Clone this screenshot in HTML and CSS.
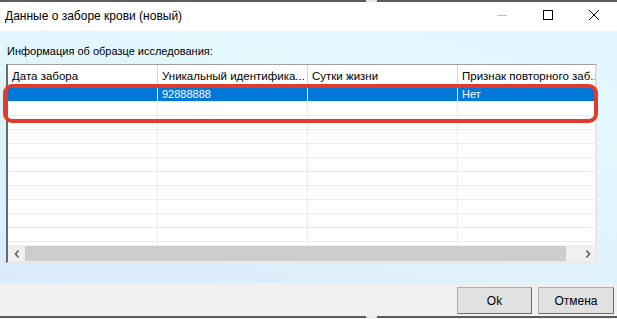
FILE: index.html
```html
<!DOCTYPE html>
<html lang="ru">
<head>
  <meta charset="UTF-8" />
  <title>Данные о заборе крови (новый)</title>
  <link rel="stylesheet" href="styles.css">
</head>
<body>
  <div class="window">
    <div class="edge"></div>

    <!-- Title bar -->
    <div class="titlebar">
      <div class="title">Данные о заборе крови (новый)</div>
      <div class="controls">
        <div class="ctl"><svg width="10" height="10" viewBox="0 0 10 10"><path d="M0 5.5H10" stroke="#c4c4c4" stroke-width="1"/></svg></div>
        <div class="ctl"><svg width="10" height="10" viewBox="0 0 10 10"><rect x="0.5" y="0.5" width="9" height="9" fill="none" stroke="#000" stroke-width="1"/></svg></div>
        <div class="ctl"><svg width="10" height="10" viewBox="0 0 10 10"><path d="M0 0L10 10M10 0L0 10" stroke="#000" stroke-width="1"/></svg></div>
      </div>
    </div>

    <!-- Client area -->
    <div class="client">
      <div class="caption">Информация об образце исследования:</div>
      <div class="grid">
        <div class="row head">
          <div class="cell">Дата забора</div>
          <div class="cell">Уникальный идентифика...</div>
          <div class="cell">Сутки жизни</div>
          <div class="cell">Признак повторного заб..</div>
        </div>
        <div class="rows">
          <div class="row selected">
            <div class="cell"></div>
            <div class="cell">92888888</div>
            <div class="cell"></div>
            <div class="cell">Нет</div>
          </div>
          <div class="row"><div class="cell"></div><div class="cell"></div><div class="cell"></div><div class="cell"></div></div>
          <div class="row"><div class="cell"></div><div class="cell"></div><div class="cell"></div><div class="cell"></div></div>
          <div class="row"><div class="cell"></div><div class="cell"></div><div class="cell"></div><div class="cell"></div></div>
          <div class="row"><div class="cell"></div><div class="cell"></div><div class="cell"></div><div class="cell"></div></div>
          <div class="row"><div class="cell"></div><div class="cell"></div><div class="cell"></div><div class="cell"></div></div>
          <div class="row"><div class="cell"></div><div class="cell"></div><div class="cell"></div><div class="cell"></div></div>
          <div class="row"><div class="cell"></div><div class="cell"></div><div class="cell"></div><div class="cell"></div></div>
          <div class="row"><div class="cell"></div><div class="cell"></div><div class="cell"></div><div class="cell"></div></div>
          <div class="row"><div class="cell"></div><div class="cell"></div><div class="cell"></div><div class="cell"></div></div>
          <div class="row"><div class="cell"></div><div class="cell"></div><div class="cell"></div><div class="cell"></div></div>
          <div class="row"><div class="cell"></div><div class="cell"></div><div class="cell"></div><div class="cell"></div></div>
        </div>
        <div class="hscroll">
          <div class="arrow"><svg width="6" height="8" viewBox="0 0 6 8"><path d="M4.5 0.5L1.5 4L4.5 7.5" fill="none" stroke="#606060" stroke-width="1.6"/></svg></div>
          <div class="track"><div class="thumb"></div></div>
          <div class="arrow"><svg width="6" height="8" viewBox="0 0 6 8"><path d="M1.5 0.5L4.5 4L1.5 7.5" fill="none" stroke="#606060" stroke-width="1.6"/></svg></div>
        </div>
      </div>
    </div>

    <!-- Footer -->
    <div class="footer">
      <button class="btn">Ok</button>
      <button class="btn">Отмена</button>
    </div>
    <div class="edge bottom"></div>

    <!-- annotation around the selected row -->
    <div class="mark"></div>
  </div>
</body>
</html>
```

FILE: styles.css
```css
* { box-sizing: border-box; }
body {
  margin: 0;
  width: 617px;
  height: 319px;
  overflow: hidden;
  font-family: "Liberation Sans", Arial, sans-serif;
  color: #000;
  background: #f0f0f0;
}

.window {
  position: relative;
  width: 617px;
  height: 319px;
  display: flex;
  flex-direction: column;
}

.edge {
  height: 2px;
  background: linear-gradient(to right, #5c5c5c 366px, #e8e8e8 366px, #e8e8e8 377px, #5c5c5c 377px);
}
.edge.bottom {
  height: 3px;
  border-bottom: 1px solid #f4f4f4;
}

.titlebar {
  height: 29px;
  background: #fff;
  display: flex;
  justify-content: space-between;
}
.title {
  padding-left: 5px;
  font-size: 12px;
  line-height: 29px;
}
.controls {
  display: flex;
}
.ctl {
  width: 46px;
  height: 25px;
  display: flex;
  align-items: center;
  justify-content: center;
}
.ctl svg { display: block; }

.client {
  height: 252px;
  padding: 14px 0 0 6px;
  background: linear-gradient(15deg, #d9eafa 0%, #dff2fc 35%, #e2f8fd 70%, #e1f7fd 100%);
}
.caption {
  font-size: 11px;
  line-height: 13px;
  margin: 0 0 6px 1px;
}

.grid {
  width: 591px;
  height: 199px;
  background: #fff;
  border-left: 2px solid #6a6a6a;
  border-top: 1px solid #a0a0a0;
  border-right: 1px solid #e3e3e3;
  border-bottom: 1px solid #e3e3e3;
  display: flex;
  flex-direction: column;
  overflow: hidden;
}

.row {
  display: grid;
  grid-template-columns: 150px 150px 150px 138px;
  height: 14px;
  border-bottom: 1px solid #ececec;
  font-size: 11px;
  line-height: 13px;
  white-space: nowrap;
}
.row .cell {
  padding-left: 4px;
  border-right: 1px solid #ececec;
  overflow: hidden;
}
.row.head {
  height: 23px;
  font-size: 11.5px;
  line-height: 22px;
  border-bottom: 1px solid #d5d5d5;
}
.row.head .cell {
  border-right: 1px solid #d5d5d5;
}
.row.selected {
  background: #0078d7;
  color: #fff;
}
.row.selected .cell {
  border-right-color: #e8f0f8;
}

.rows {
  flex: 1;
  overflow: hidden;
}

.hscroll {
  height: 17px;
  display: flex;
  background: #f0f0f0;
}
.arrow {
  width: 17px;
  display: flex;
  align-items: center;
  justify-content: center;
}
.track {
  flex: 1;
  padding: 1px 0;
}
.thumb {
  width: 541px;
  height: 100%;
  background: #cdcdcd;
}

.footer {
  height: 33px;
  background: #f0f0f0;
  display: flex;
  justify-content: flex-end;
  align-items: center;
  gap: 6px;
  padding-right: 3px;
}
.btn {
  width: 75px;
  height: 27px;
  margin-top: 2px;
  font-family: inherit;
  font-size: 12px;
  background: #e1e1e1;
  border: 1px solid #adadad;
  border-right-color: #6e6e6e;
  border-bottom-color: #6e6e6e;
  padding: 0;
  color: #000;
}
.btn:last-child {
  width: 76px;
}

.mark {
  position: absolute;
  left: 3px;
  top: 84px;
  width: 595px;
  height: 39px;
  border: 4px solid #e23b2e;
  border-radius: 9px;
}
```
